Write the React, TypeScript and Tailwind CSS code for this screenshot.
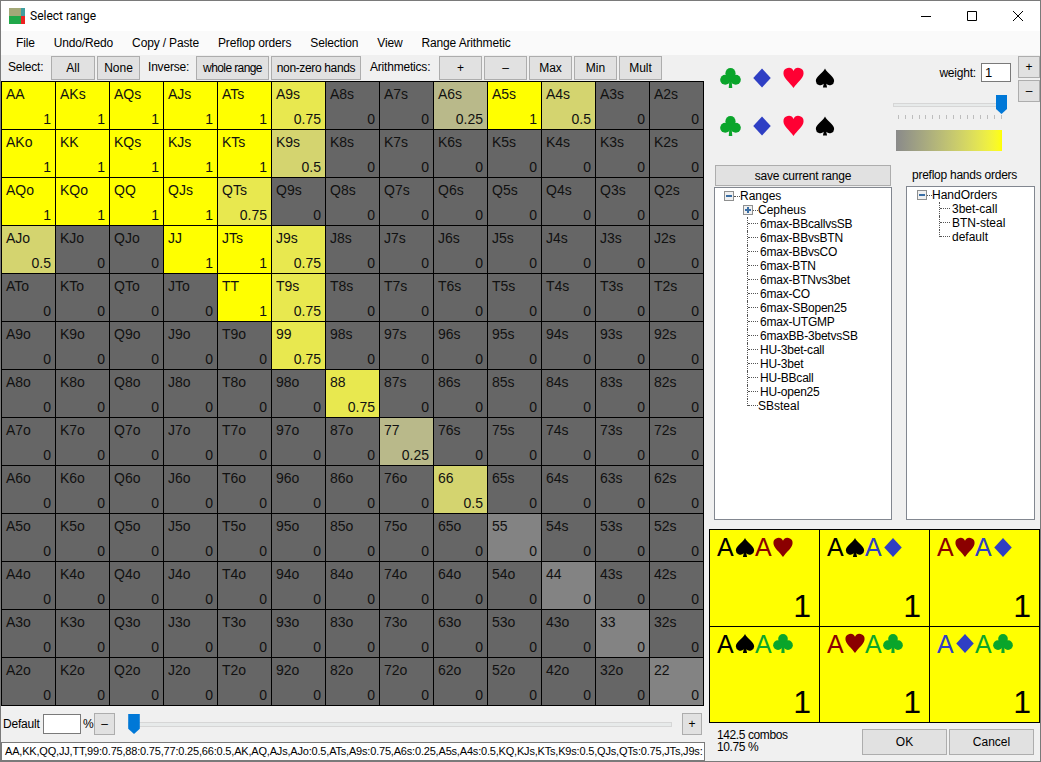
const ranks = ["A", "K", "Q", "J", "T", "9", "8", "7", "6", "5", "4", "3", "2"];

const weights: { [key: string]: number } = {
  AA: 1, AKs: 1, AQs: 1, AJs: 1, ATs: 1, A9s: 0.75, A6s: 0.25, A5s: 1, A4s: 0.5,
  AKo: 1, KK: 1, KQs: 1, KJs: 1, KTs: 1, K9s: 0.5,
  AQo: 1, KQo: 1, QQ: 1, QJs: 1, QTs: 0.75,
  AJo: 0.5, JJ: 1, JTs: 1, J9s: 0.75,
  TT: 1, T9s: 0.75,
  "99": 0.75, "88": 0.75, "77": 0.25, "66": 0.5,
};

const menu = ["File", "Undo/Redo", "Copy / Paste", "Preflop orders", "Selection", "View", "Range Arithmetic"];

const rangeItems = [
  "6max-BBcallvsSB", "6max-BBvsBTN", "6max-BBvsCO", "6max-BTN", "6max-BTNvs3bet", "6max-CO",
  "6max-SBopen25", "6max-UTGMP", "6maxBB-3betvsSB", "HU-3bet-call", "HU-3bet", "HU-BBcall", "HU-open25",
];

const cellColor = (weight: number, pair: boolean) => {
  if (weight === 1) return "bg-[#ffff00]";
  if (weight === 0.75) return "bg-[#e8e84f]";
  if (weight === 0.5) return "bg-[#d4d46f]";
  if (weight === 0.25) return "bg-[#b9b98a]";
  return pair ? "bg-[#838383]" : "bg-[#666666]";
};

type Suit = "club" | "diamond" | "heart" | "spade";

const SuitIcon = ({ suit, className }: { suit: Suit; className: string }) => (
  <svg viewBox="0 0 24 24" className={className} fill="currentColor">
    {suit === "club" && (
      <>
        <circle cx="12" cy="6.500" r="5.800" />
        <circle cx="6" cy="14" r="5.800" />
        <circle cx="18" cy="14" r="5.800" />
        <path d="M11 10h2l1 13.500h-4z" />
      </>
    )}
    {suit === "diamond" && <path d="M12 .5 22.500 12 12 23.500 1.500 12z" />}
    {suit === "heart" && <path d="M12 23.500C8 17 .5 12.500.5 6.500a6 6 0 0 1 11.500-2.500 6 6 0 0 1 11.500 2.500C23.500 12.500 16 17 12 23.500z" />}
    {suit === "spade" && <path d="M12 .5C9.500 6 1 10 1 15.500a5.500 5.500 0 0 0 9.500 3.500L9.500 23.500h5L13.500 19a5.500 5.500 0 0 0 9.500-3.500C23 10 14.500 6 12 .5z" />}
  </svg>
);

const Btn = ({ label, className }: { label: string; className: string }) => (
  <button className={`bg-[#e1e1e1] border border-[#adadad] text-[12px] text-black flex items-center justify-center ${className}`}>
    {label}
  </button>
);

const Expander = ({ open }: { open: boolean }) => (
  <span className="relative block w-[10px] h-[10px] shrink-0 border border-[#8e8f8f] bg-[#f0f0f0]">
    <span className="absolute left-[1px] top-[3px] w-[6px] h-[2px] bg-[#3a6ea5]" />
    {!open && <span className="absolute left-[3px] top-[1px] w-[2px] h-[6px] bg-[#3a6ea5]" />}
  </span>
);

const Connector = ({ last }: { last?: boolean }) => (
  <span className={`block w-[11px] shrink-0 border-l border-dotted border-[#555] ${last ? "h-[7px] self-start" : "h-[14px]"}`}>
    <span className="block h-[7px] border-b border-dotted border-[#555]" />
  </span>
);

const RangesTree = () => (
  <div className="flex-1 bg-white border border-[#828790] pt-[1px] pl-[9px] text-[12px] leading-[14px] text-black overflow-hidden">
    <div className="flex items-center h-[14px]">
      <Expander open />
      <span className="w-[6px] border-b border-dotted border-[#555]" />
      <span>Ranges</span>
    </div>
    <div className="flex items-center h-[14px] pl-[19px]">
      <Expander open={false} />
      <span className="w-[5px] border-b border-dotted border-[#555]" />
      <span>Cepheus</span>
    </div>
    {rangeItems.map((item) => (
      <div key={item} className="flex items-center h-[14px] pl-[23px]">
        <Connector />
        <span className="ml-[2px] tracking-[-0.2px]">{item}</span>
      </div>
    ))}
    <div className="flex items-center h-[14px] pl-[23px]">
      <Connector last />
      <span>SBsteal</span>
    </div>
  </div>
);

const OrdersTree = () => (
  <div className="flex-1 bg-white border border-[#828790] pt-[1px] pl-[10px] text-[12px] leading-[14px] text-black overflow-hidden">
    <div className="flex items-center h-[14px]">
      <Expander open />
      <span className="w-[5px] border-b border-dotted border-[#555]" />
      <span>HandOrders</span>
    </div>
    {["3bet-call", "BTN-steal"].map((item) => (
      <div key={item} className="flex items-center h-[14px] pl-[22px]">
        <Connector />
        <span className="ml-[2px]">{item}</span>
      </div>
    ))}
    <div className="flex items-center h-[14px] pl-[22px]">
      <Connector last />
      <span className="ml-[2px]">default</span>
    </div>
  </div>
);

const Thumb = ({ className }: { className: string }) => (
  <svg viewBox="0 0 11 19" className={className}>
    <path d="M0 0h11v14l-5.500 5L0 14z" fill="#0078d7" />
  </svg>
);

const SuitRow = () => (
  <div className="flex items-center h-[21px]">
    <SuitIcon suit="club" className="w-[21px] h-[22px] text-[#0aa52b]" />
    <SuitIcon suit="diamond" className="w-[20px] h-[22px] ml-[11px] text-[#2f3fc4]" />
    <SuitIcon suit="heart" className="w-[21px] h-[22px] ml-[11px] text-[#ff0033]" />
    <SuitIcon suit="spade" className="w-[20px] h-[22px] ml-[11px] text-black" />
  </div>
);

const suitColor: { [key in Suit]: string } = {
  spade: "text-black",
  heart: "text-[#8b0000]",
  diamond: "text-[#2f3fc4]",
  club: "text-[#0aa52b]",
};

const combos: Suit[][] = [
  ["spade", "heart"],
  ["spade", "diamond"],
  ["heart", "diamond"],
  ["spade", "club"],
  ["heart", "club"],
  ["diamond", "club"],
];

const ComboCard = ({ suits }: { suits: Suit[] }) => (
  <div className="bg-[#ffff00] flex flex-col justify-between pl-[7px] pr-[8px] pt-[3px] pb-[3px]">
    <div className="flex items-center text-[25px] leading-[28px]">
      {suits.map((suit, i) => (
        <span key={i} className={`flex items-center ${suitColor[suit]}`}>
          <span className="w-[18px]">A</span>
          <SuitIcon suit={suit} className="w-[20px] h-[21px]" />
        </span>
      ))}
    </div>
    <div className="text-right text-[32px] leading-[34px] text-black">1</div>
  </div>
);

export default function App() {
  return (
    <div className="w-[1041px] h-[762px] overflow-hidden flex flex-col bg-[#f0f0f0] border border-[#7a7a7a] font-['Liberation_Sans',sans-serif] text-black">
      <div className="h-[30px] shrink-0 bg-white flex items-center pl-[8px]">
        <svg viewBox="0 0 16 16" className="w-[16px] h-[16px]">
          <rect width="12" height="8" fill="#a3a878" />
          <rect x="12" width="4" height="8" fill="#3f9f9f" />
          <rect y="8" width="12" height="8" fill="#21a84a" />
          <rect x="12" y="8" width="4" height="8" fill="#ee2222" />
        </svg>
        <span className="ml-[5px] text-[12px] font-['Roboto',sans-serif]">Select range</span>
        <div className="ml-auto flex items-center">
          <svg viewBox="0 0 46 30" className="w-[46px] h-[30px]"><path d="M19 15.500h10" stroke="#000" /></svg>
          <svg viewBox="0 0 46 30" className="w-[46px] h-[30px]"><path d="M19.500 10.500h9v9h-9z" stroke="#000" fill="none" /></svg>
          <svg viewBox="0 0 46 30" className="w-[46px] h-[30px]"><path d="M19 10l10 10M29 10 19 20" stroke="#000" fill="none" /></svg>
        </div>
      </div>

      <div className="h-[24px] shrink-0 bg-[#fafafa] flex items-center pl-[15px] gap-[19px] text-[12px] tracking-[-0.15px]">
        {menu.map((item) => (
          <span key={item}>{item}</span>
        ))}
      </div>

      <div className="flex-1 flex min-h-0">
        <div className="w-[705px] shrink-0 flex flex-col">
          <div className="h-[26px] shrink-0 flex items-center text-[12px] pl-[7px]">
            <span className="w-[43px] -mt-[3px] tracking-[-0.2px]">Select:</span>
            <Btn label="All" className="w-[44px] h-[24px]" />
            <Btn label="None" className="w-[43px] h-[24px] ml-[2px]" />
            <span className="ml-[8px] w-[48px] -mt-[3px] tracking-[-0.2px]">Inverse:</span>
            <Btn label="whole range" className="w-[73px] h-[24px] tracking-[-0.6px]" />
            <Btn label="non-zero hands" className="w-[90px] h-[24px] ml-[2px] tracking-[-0.35px]" />
            <span className="ml-[9px] w-[69px] -mt-[3px] tracking-[-0.2px]">Arithmetics:</span>
            {["+", "–", "Max", "Min", "Mult"].map((label) => (
              <Btn key={label} label={label} className="w-[43px] h-[24px] mr-[2px]" />
            ))}
          </div>

          <div className="grid grid-cols-[repeat(13,53px)] grid-rows-[repeat(13,47px)] gap-px bg-black p-px w-[703px] h-[625px] shrink-0">
            {ranks.map((r1, i) =>
              ranks.map((r2, j) => {
                const name = i === j ? r1 + r2 : i < j ? r1 + r2 + "s" : r2 + r1 + "o";
                const weight = weights[name] ?? 0;
                return (
                  <div key={name} className={`flex flex-col justify-between px-[4px] pt-[4px] pb-[2px] text-[14px] leading-[16px] text-[#111] ${cellColor(weight, i === j)}`}>
                    <span>{name}</span>
                    <span className="text-right">{weight}</span>
                  </div>
                );
              })
            )}
          </div>

          <div className="h-[36px] shrink-0 flex items-center text-[12px] pl-[2px]">
            <span className="w-[40px] tracking-[-0.2px]">Default</span>
            <div className="w-[38px] h-[20px] bg-white border border-[#7a7a7a]" />
            <span className="ml-[2px] w-[7px]">%</span>
            <Btn label="–" className="w-[21px] h-[22px] ml-[4px]" />
            <div className="relative flex-1 h-[20px] ml-[13px] mr-[10px] flex items-center">
              <div className="w-full h-[5px] bg-[#e7eaea] border border-[#d6d6d6]" />
              <Thumb className="absolute left-0 top-0 w-[12px] h-[20px]" />
            </div>
            <Btn label="+" className="w-[20px] h-[22px] mr-[4px]" />
          </div>

          <div className="h-[19px] w-[704px] shrink-0 bg-white border border-[#7a7a7a] pl-[3px] text-[11px] leading-[17px] whitespace-nowrap overflow-hidden tracking-[-0.19px]">
            AA,KK,QQ,JJ,TT,99:0.75,88:0.75,77:0.25,66:0.5,AK,AQ,AJs,AJo:0.5,ATs,A9s:0.75,A6s:0.25,A5s,A4s:0.5,KQ,KJs,KTs,K9s:0.5,QJs,QTs:0.75,JTs,J9s:
          </div>
        </div>

        <div className="flex-1 flex flex-col min-w-0">
          <div className="h-[110px] shrink-0 flex">
            <div className="w-[187px] shrink-0 pl-[14px] pt-[12px] flex flex-col gap-[27px]">
              <SuitRow />
              <SuitRow />
            </div>
            <div className="w-[125px] shrink-0 pt-[8px]">
              <div className="flex items-center justify-end pr-[7px] text-[12px] h-[19px]">
                <span className="mr-[5px] tracking-[-0.2px]">weight:</span>
                <div className="w-[30px] h-[19px] bg-white border border-[#7a7a7a] pl-[3px] text-[13px] leading-[17px]">1</div>
              </div>
              <div className="relative mt-[13px] h-[19px] w-[114px] flex items-center">
                <div className="w-[108px] h-[4px] bg-[#e7eaea] border border-[#d6d6d6]" />
                <Thumb className="absolute right-0 top-0 w-[11px] h-[19px]" />
              </div>
              <div className="mt-[1px] ml-[5px] w-[104px] flex justify-between">
                {Array.from({ length: 16 }).map((_, i) => (
                  <span key={i} className="block w-px h-[4px] bg-[#bdbdbd]" />
                ))}
              </div>
              <div className="mt-[11px] ml-[3px] w-[106px] h-[21px] bg-gradient-to-r from-[#8a8a8a] to-[#ffff00]" />
            </div>
            <div className="flex flex-col gap-[2px] pt-[1px]">
              <Btn label="+" className="w-[22px] h-[22px]" />
              <Btn label="–" className="w-[22px] h-[22px]" />
            </div>
          </div>

          <div className="h-[355px] shrink-0 flex pl-[8px] gap-[14px]">
            <div className="w-[178px] shrink-0 flex flex-col">
              <Btn label="save current range" className="w-[176px] h-[21px] ml-[1px] mb-[1px] shrink-0 tracking-[-0.2px]" />
              <RangesTree />
            </div>
            <div className="w-[129px] shrink-0 flex flex-col">
              <div className="h-[21px] shrink-0 text-[12px] pl-[6px] leading-[20px] tracking-[-0.25px] whitespace-nowrap">preflop hands orders</div>
              <OrdersTree />
            </div>
          </div>

          <div className="mt-[9px] ml-[3px] w-[331px] h-[194px] shrink-0 grid grid-cols-3 grid-rows-2 gap-px bg-black p-px">
            {combos.map((suits, i) => (
              <ComboCard key={i} suits={suits} />
            ))}
          </div>

          <div className="flex-1 flex items-start pl-[11px] pt-[6px]">
            <div className="w-[145px] text-[12px] leading-[12px] tracking-[-0.4px]">
              <div>142.5 combos</div>
              <div>10.75 %</div>
            </div>
            <Btn label="OK" className="w-[85px] h-[26px]" />
            <Btn label="Cancel" className="w-[85px] h-[26px] ml-[2px]" />
          </div>
        </div>
      </div>
    </div>
  );
}
